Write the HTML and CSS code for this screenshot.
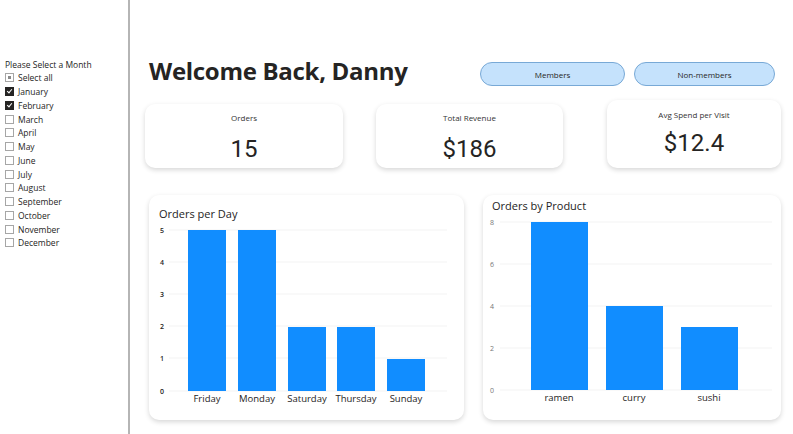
FILE: index.html
```html
<!DOCTYPE html>
<html lang="en">
<head>
  <meta charset="UTF-8">
  <title>Sales Dashboard</title>
  <link rel="stylesheet" href="styles.css">
</head>
<body>
  <!-- Month filter -->
  <div class="sidebar">
    <div class="filter-title">Please Select a Month</div>
    <ul class="month-list">
      <li><span class="box partial"></span>Select all</li>
      <li><span class="box checked"></span>January</li>
      <li><span class="box checked"></span>February</li>
      <li><span class="box"></span>March</li>
      <li><span class="box"></span>April</li>
      <li><span class="box"></span>May</li>
      <li><span class="box"></span>June</li>
      <li><span class="box"></span>July</li>
      <li><span class="box"></span>August</li>
      <li><span class="box"></span>September</li>
      <li><span class="box"></span>October</li>
      <li><span class="box"></span>November</li>
      <li><span class="box"></span>December</li>
    </ul>
  </div>

  <!-- Main report -->
  <div class="main">
    <div class="header">
      <h1>Welcome Back, Danny</h1>
      <div class="segments">
        <button class="seg-btn members">Members</button>
        <button class="seg-btn non-members">Non-members</button>
      </div>
    </div>

    <div class="kpis">
      <div class="kpi kpi-orders">
        <div class="kpi-label">Orders</div>
        <div class="kpi-value">15</div>
      </div>
      <div class="kpi kpi-revenue">
        <div class="kpi-label">Total Revenue</div>
        <div class="kpi-value">$186</div>
      </div>
      <div class="kpi kpi-avg">
        <div class="kpi-label">Avg Spend per Visit</div>
        <div class="kpi-value">$12.4</div>
      </div>
    </div>

    <div class="charts">
      <div class="chart chart-day">
        <div class="chart-title">Orders per Day</div>
        <svg width="315" height="190" viewBox="0 0 315 190">
          <g class="grid">
            <line x1="20" y1="8" x2="298" y2="8"/>
            <line x1="20" y1="40" x2="298" y2="40"/>
            <line x1="20" y1="72" x2="298" y2="72"/>
            <line x1="20" y1="104" x2="298" y2="104"/>
            <line x1="20" y1="136" x2="298" y2="136"/>
            <line x1="20" y1="169" x2="298" y2="169"/>
          </g>
          <g class="y-labels dark">
            <text x="13" y="11">5</text>
            <text x="13" y="43">4</text>
            <text x="13" y="75">3</text>
            <text x="13" y="107">2</text>
            <text x="13" y="139">1</text>
            <text x="13" y="172">0</text>
          </g>
          <g class="bars">
            <rect x="39" y="8" width="38" height="161"/>
            <rect x="89" y="8" width="38" height="161"/>
            <rect x="139" y="105" width="38" height="64"/>
            <rect x="188" y="105" width="38" height="64"/>
            <rect x="238" y="137" width="38" height="32"/>
          </g>
          <g class="x-labels">
            <text x="58" y="180">Friday</text>
            <text x="108" y="180">Monday</text>
            <text x="158" y="180">Saturday</text>
            <text x="207" y="180">Thursday</text>
            <text x="257" y="180">Sunday</text>
          </g>
        </svg>
      </div>

      <div class="chart chart-product">
        <div class="chart-title">Orders by Product</div>
        <svg width="298" height="196" viewBox="0 0 298 196">
          <g class="grid">
            <line x1="17" y1="8" x2="289" y2="8"/>
            <line x1="17" y1="50" x2="289" y2="50"/>
            <line x1="17" y1="92" x2="289" y2="92"/>
            <line x1="17" y1="134" x2="289" y2="134"/>
            <line x1="17" y1="176" x2="289" y2="176"/>
          </g>
          <g class="y-labels">
            <text x="9" y="11">8</text>
            <text x="9" y="53">6</text>
            <text x="9" y="95">4</text>
            <text x="9" y="137">2</text>
            <text x="9" y="179">0</text>
          </g>
          <g class="bars">
            <rect x="48" y="8" width="57" height="168"/>
            <rect x="123" y="92" width="57" height="84"/>
            <rect x="198" y="113" width="57" height="63"/>
          </g>
          <g class="x-labels">
            <text x="76" y="187">ramen</text>
            <text x="151" y="187">curry</text>
            <text x="226" y="187">sushi</text>
          </g>
        </svg>
      </div>
    </div>
  </div>
</body>
</html>
```

FILE: styles.css
```css
/* Global */
body {
  margin: 0;
  height: 434px;
  overflow: hidden;
  display: flex;
  font-family: 'Open Sans', 'Noto Sans', sans-serif;
  color: #252423;
  background: #ffffff;
}

/* Sidebar filter */
.sidebar {
  width: 130px;
  flex-shrink: 0;
  border-right: 2px solid #b5b5b5;
  padding: 59px 0 0 5px;
  box-sizing: border-box;
}

.filter-title {
  font-size: 8.5px;
  line-height: 12px;
}

.month-list {
  list-style: none;
  margin: 0;
  padding: 0;
}

.month-list li {
  display: flex;
  align-items: center;
  height: 13.75px;
  font-size: 8.5px;
}

.box {
  width: 7px;
  height: 7px;
  border: 1px solid #a6a6a6;
  margin-right: 4px;
  position: relative;
  box-sizing: content-box;
}

.box.checked {
  background: #252423;
  border-color: #252423;
}

.box.checked::after {
  content: '';
  position: absolute;
  left: 2px;
  top: 0px;
  width: 2px;
  height: 4px;
  border: solid #ffffff;
  border-width: 0 1px 1px 0;
  transform: rotate(40deg);
}

.box.partial::after {
  content: '';
  position: absolute;
  left: 2px;
  top: 2px;
  width: 3px;
  height: 3px;
  background: #8a8a8a;
}

/* Main area */
.main {
  flex: 1;
  display: flex;
  flex-direction: column;
}

.header {
  display: flex;
  align-items: flex-start;
  margin-top: 57px;
  padding: 0 18px 0 19px;
}

h1 {
  margin: 0;
  font-size: 24px;
  line-height: 28px;
  font-weight: 700;
  letter-spacing: -0.3px;
}

.segments {
  margin-left: auto;
  margin-top: 5px;
  display: flex;
  gap: 9px;
}

.seg-btn {
  height: 24px;
  background: #c5e2fc;
  border: 1px solid #78a9d6;
  border-radius: 12px;
  font-family: 'Open Sans', sans-serif;
  font-size: 8px;
  color: #252423;
  padding: 0;
}

.members {
  width: 145px;
}

.non-members {
  width: 141px;
}

/* KPI cards */
.kpis {
  display: flex;
  align-items: flex-end;
  margin-top: 14px;
  padding-left: 15px;
}

.kpi {
  height: 64px;
  background: #ffffff;
  border-radius: 10px;
  box-shadow: 0 2px 5px rgba(0, 0, 0, 0.16);
  text-align: center;
  box-sizing: border-box;
  padding-top: 8px;
}

.kpi-orders {
  width: 198px;
}

.kpi-revenue {
  width: 187px;
  margin-left: 33px;
}

.kpi-avg {
  width: 174px;
  height: 68px;
  margin-left: 44px;
  padding-top: 9px;
}

.kpi-label {
  font-size: 8px;
  line-height: 12px;
  color: #333333;
}

.kpi-value {
  font-family: 'Roboto', sans-serif;
  font-size: 24px;
  line-height: 30px;
  margin-top: 10px;
  color: #252423;
}

.kpi-avg .kpi-value {
  margin-top: 7px;
}

/* Chart cards */
.charts {
  display: flex;
  gap: 19px;
  margin-top: 27px;
  padding-left: 19px;
}

.chart {
  height: 225px;
  background: #ffffff;
  border-radius: 10px;
  box-shadow: 0 2px 5px rgba(0, 0, 0, 0.16);
  overflow: hidden;
}

.chart svg {
  display: block;
}

.chart-day {
  width: 315px;
}

.chart-product {
  width: 298px;
}

.chart-title {
  font-size: 11px;
  line-height: 16px;
  color: #252423;
  padding-left: 10px;
}

.chart-day .chart-title {
  padding-top: 11px;
  height: 16px;
}

.chart-product .chart-title {
  padding-top: 3px;
  height: 16px;
  padding-left: 9px;
}

.grid line {
  stroke: #f3f3f3;
  stroke-width: 1;
}

.bars rect {
  fill: #118dff;
}

.y-labels text {
  font-family: 'Open Sans', sans-serif;
  font-size: 7px;
  fill: #777777;
  text-anchor: middle;
}

.y-labels.dark text {
  fill: #252423;
  font-weight: 600;
}

.x-labels text {
  font-family: 'Open Sans', sans-serif;
  font-size: 9.5px;
  font-weight: 500;
  fill: #252423;
  text-anchor: middle;
}
```
